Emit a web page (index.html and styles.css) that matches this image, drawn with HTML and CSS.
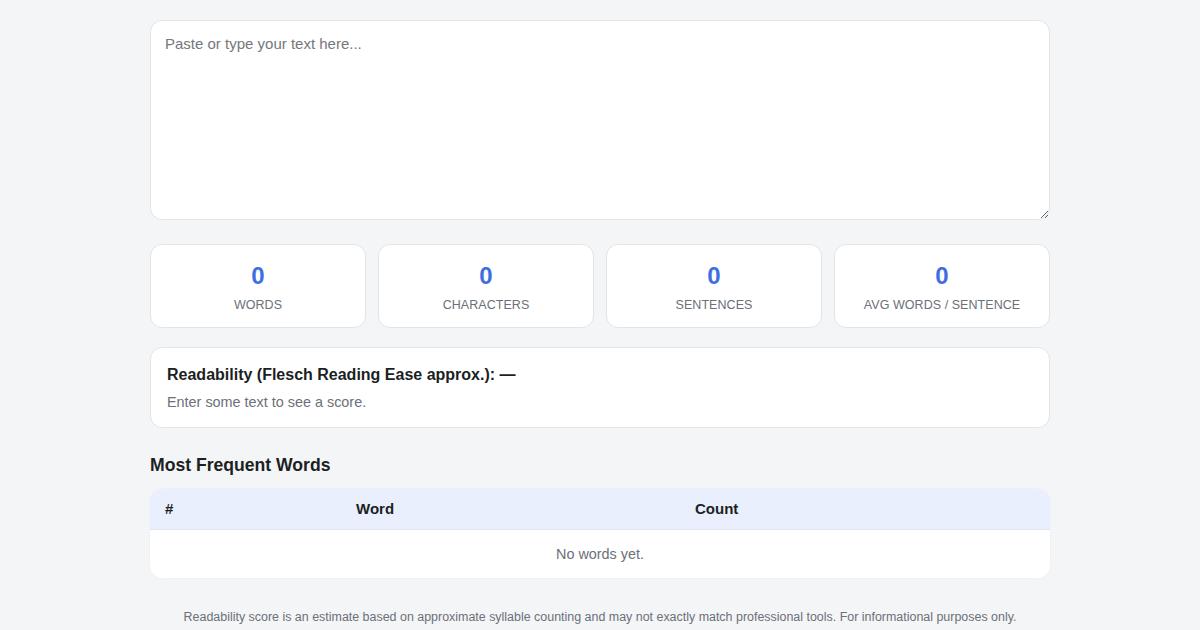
FILE: index.html
```html
<!DOCTYPE html>
<html lang="en">
<head>
<meta charset="utf-8">
<title>Text Analyzer</title>
<link rel="stylesheet" href="styles.css">
</head>
<body>
<main class="wrap">
  <textarea class="input" placeholder="Paste or type your text here..."></textarea>
  <section class="stats">
    <div class="stat"><div class="num">0</div><div class="label">Words</div></div>
    <div class="stat"><div class="num">0</div><div class="label">Characters</div></div>
    <div class="stat"><div class="num">0</div><div class="label">Sentences</div></div>
    <div class="stat"><div class="num">0</div><div class="label">Avg Words / Sentence</div></div>
  </section>
  <section class="read">
    <div class="read-title">Readability (Flesch Reading Ease approx.): —</div>
    <div class="read-text">Enter some text to see a score.</div>
  </section>
  <h2 class="heading">Most Frequent Words</h2>
  <div class="table-box">
    <table class="freq">
      <thead>
        <tr><th class="c1">#</th><th class="c2">Word</th><th class="c3">Count</th></tr>
      </thead>
      <tbody>
        <tr><td colspan="3" class="empty">No words yet.</td></tr>
      </tbody>
    </table>
  </div>
  <p class="note">Readability score is an estimate based on approximate syllable counting and may not exactly match professional tools. For informational purposes only.</p>
</main>
</body>
</html>
```

FILE: styles.css
```css
* { box-sizing: border-box; }
html, body { margin: 0; padding: 0; }
body {
  background: #f4f5f7;
  font-family: "Liberation Sans", Arial, sans-serif;
  color: #1f2328;
}
.wrap {
  width: 900px;
  margin: 0 auto;
  padding-top: 20px;
  display: flex;
  flex-direction: column;
}
.input {
  display: block;
  width: 100%;
  height: 200px;
  border: 1px solid #e2e4e8;
  border-radius: 12px;
  background: #fff;
  padding: 14px 14px;
  font-family: "Liberation Sans", Arial, sans-serif;
  font-size: 15px;
  line-height: 18px;
  color: #1f2328;
  resize: vertical;
  outline: none;
}
.input::placeholder { color: #74777d; }
.stats {
  margin-top: 24px;
  display: grid;
  grid-template-columns: repeat(4, 1fr);
  gap: 12px;
}
.stat {
  height: 84px;
  background: #fff;
  border: 1px solid #e2e4e8;
  border-radius: 12px;
  display: flex;
  flex-direction: column;
  align-items: center;
  padding-top: 17px;
}
.num {
  font-size: 24px;
  font-weight: 700;
  line-height: 28px;
  color: #3e6fe0;
}
.label {
  margin-top: 7px;
  font-size: 12.5px;
  line-height: 16px;
  letter-spacing: 0.05px;
  text-transform: uppercase;
  color: #6b7079;
}
.read {
  margin-top: 19px;
  height: 81px;
  background: #fff;
  border: 1px solid #e2e4e8;
  border-radius: 12px;
  padding: 17px 16px;
}
.read-title {
  font-size: 16px;
  font-weight: 700;
  line-height: 20px;
  color: #1c1f24;
}
.read-text {
  margin-top: 8px;
  font-size: 14.4px;
  line-height: 18px;
  color: #6b7079;
}
.heading {
  margin: 26px 0 0;
  font-size: 17.6px;
  line-height: 22px;
  font-weight: 700;
  color: #1c1f24;
}
.table-box {
  margin-top: 13px;
  background: #fff;
  border-radius: 12px;
  overflow: hidden;
  box-shadow: 0 0 0 1px #f0f1f4;
}
.freq {
  width: 100%;
  border-collapse: collapse;
  table-layout: fixed;
}
.freq th {
  background: #e9effc;
  height: 40px;
  text-align: left;
  font-size: 15px;
  font-weight: 700;
  color: #1c1f24;
  padding: 0 14px 0 15px;
  border-bottom: 1px solid #dfe3ea;
}
.c1 { width: 191px; }
.c2 { width: 339px; }
.empty {
  height: 49px;
  text-align: center;
  font-size: 14.4px;
  color: #6b7079;
  padding: 0;
}
.note {
  margin: 31px 0 0;
  text-align: center;
  font-size: 12.45px;
  line-height: 16px;
  color: #6b7079;
}
```
